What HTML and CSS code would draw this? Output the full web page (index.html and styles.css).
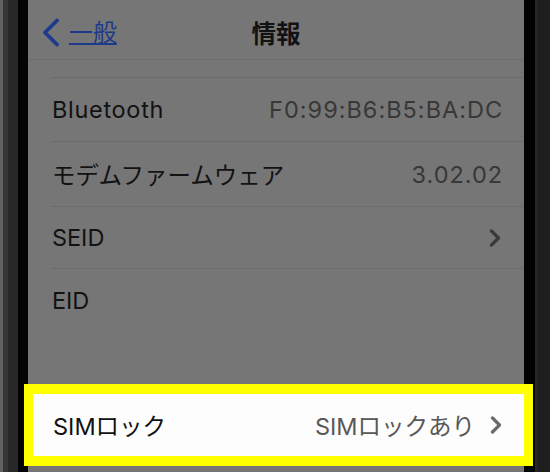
FILE: index.html
```html
<!DOCTYPE html>
<html lang="ja">
<head>
    <meta charset="UTF-8">
    <title>情報</title>
    <link rel="stylesheet" href="styles.css">
</head>
<body>

<div class="device">
    <div class="edge-left"></div>
    <div class="bezel-left"></div>

    <div class="screen">
        <div class="nav">
            <div class="back">
                <svg class="back-icon" width="18" height="30" viewBox="0 0 18 30">
                    <polyline points="15,2.5 3,14.5 15,26.5" fill="none" stroke="#1d3a8c" stroke-width="3.8" stroke-linecap="round" stroke-linejoin="round"/>
                </svg>
                <span class="back-label">一般</span>
            </div>
            <div class="title">情報</div>
        </div>

        <div class="row partial"><div class="row-inner"></div></div>
        <div class="row h64"><div class="row-inner"><span class="label wide">Bluetooth</span><span class="value">F0:99:B6:B5:BA:DC</span></div></div>
        <div class="row h65"><div class="row-inner"><span class="label">モデムファームウェア</span><span class="value">3.02.02</span></div></div>
        <div class="row h62">
            <div class="row-inner">
                <span class="label">SEID</span>
                <svg class="chevron" width="12" height="18" viewBox="0 0 12 18">
                    <polyline points="2.5,2 9.5,9 2.5,16" fill="none" stroke="#3a3a3a" stroke-width="3.2" stroke-linecap="round" stroke-linejoin="round"/>
                </svg>
            </div>
        </div>
        <div class="row h63 last"><div class="row-inner"><span class="label">EID</span></div></div>
    </div>

    <div class="bezel-right"></div>
    <div class="edge-right"></div>
</div>

<!-- highlight annotation over the SIM lock row -->
<div class="highlight">
    <div class="sim-row">
        <span class="label">SIMロック</span>
        <span class="sim-value">SIMロックあり</span>
        <svg class="chevron" width="12" height="18" viewBox="0 0 12 18">
            <polyline points="2.5,2 9.5,9 2.5,16" fill="none" stroke="#6a6a6a" stroke-width="3.2" stroke-linecap="round" stroke-linejoin="round"/>
        </svg>
    </div>
</div>

</body>
</html>
```

FILE: styles.css
```css
body {
    margin: 0;
    width: 550px;
    height: 472px;
    overflow: hidden;
    background: #1f1f1f;
    font-family: Inter, "Noto Sans CJK JP", sans-serif;
}

.device {
    display: flex;
    height: 472px;
}

.edge-left {
    width: 3px;
    background: #626262;
    border-right: 5px solid #363636;
}
.bezel-left {
    width: 10px;
    background: #282828;
    border-right: 10px solid #040404;
}

.screen {
    width: 499px;
    background: #767676;
    display: flex;
    flex-direction: column;
}

.bezel-right {
    width: 11px;
    background: #030303;
}
.edge-right {
    width: 12px;
    background: #1e1e1e;
    border-left: 3px solid #272727;
}

/* nav bar */
.nav {
    height: 59px;
    border-bottom: 1px solid #6c6c6c;
    position: relative;
    display: flex;
    align-items: center;
    justify-content: center;
}
.back {
    position: absolute;
    left: 14px;
    top: 18px;
    display: flex;
    align-items: center;
    gap: 9px;
}
.back-label {
    color: #1d3a8c;
    font-size: 24px;
    text-decoration: underline;
    text-decoration-thickness: 1.5px;
    text-underline-offset: 2px;
    line-height: 30px;
}
.title {
    font-size: 24.5px;
    font-weight: 600;
    color: #121212;
    padding-top: 5px;
}

/* rows */
.row {
    padding-left: 23px;
    display: flex;
}
.row-inner {
    flex: 1;
    display: flex;
    align-items: center;
    justify-content: space-between;
    padding-right: 22px;
    border-bottom: 1px solid #6c6c6c;
}
.row.last .row-inner {
    border-bottom: none;
}
.partial { height: 18px; }
.h64 { height: 64px; }
.h65 { height: 65px; }
.h62 { height: 62px; }
.h63 { height: 63px; }

.label {
    font-size: 23.5px;
    color: #121212;
    padding-left: 1px;
}
.label.wide {
    letter-spacing: 0.7px;
}
.value {
    font-size: 23.5px;
    color: #383838;
    letter-spacing: 1px;
    margin-right: -1px;
}
.chevron {
    display: block;
    margin-right: 1px;
}

/* annotation */
.highlight {
    position: absolute;
    left: 24px;
    top: 384px;
    width: 509px;
    height: 82px;
    box-sizing: border-box;
    border: 9px solid #ffff00;
    border-top-width: 10px;
    border-bottom-width: 10px;
    background: #fdfdfd;
}
.sim-row {
    display: flex;
    align-items: center;
    height: 100%;
    padding-left: 19px;
    padding-right: 21px;
}
.sim-row .label {
    color: #111;
    flex: 1;
}
.sim-value {
    font-size: 23.5px;
    color: #585858;
    margin-right: 15px;
}
```
